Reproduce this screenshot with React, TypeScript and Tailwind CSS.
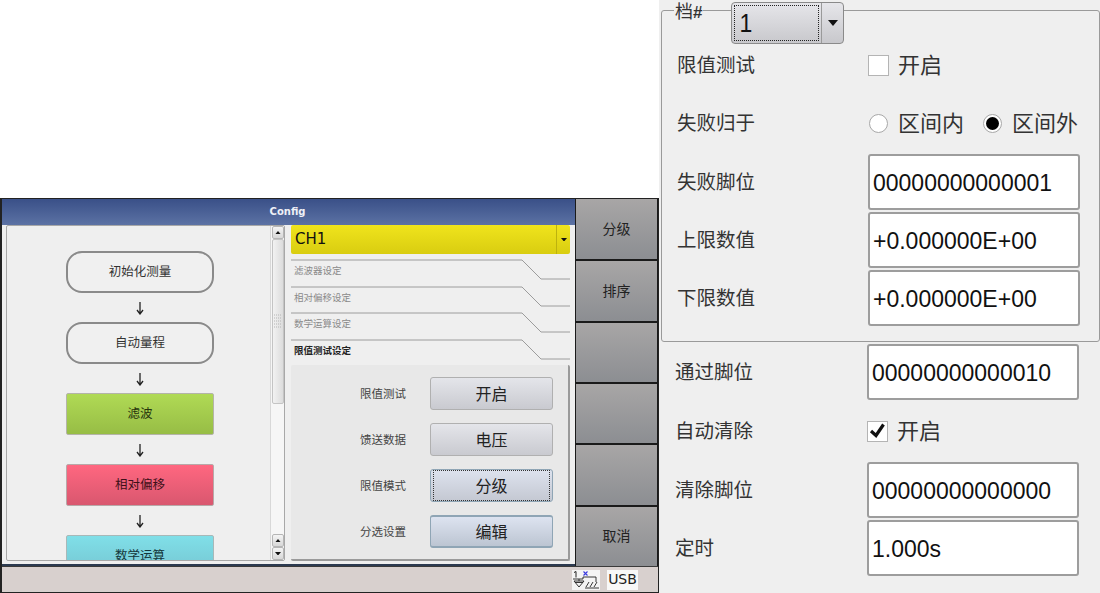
import React from 'react';

const cjk = { fontFamily: '"Noto Sans", "Noto Sans CJK SC", sans-serif' };
const arial = '"Liberation Sans", "Noto Sans CJK SC", sans-serif';

const nodes = [
  { label: '初始化测量', cls: 'rounded-[16px] border-[2px] border-[#8a8a8a] bg-[#f0f0f0] text-[#333]' },
  { label: '自动量程', cls: 'rounded-[16px] border-[2px] border-[#8a8a8a] bg-[#f0f0f0] text-[#333]' },
  { label: '滤波', cls: 'rounded-[2px] border border-[#b4b4a8] bg-gradient-to-b from-[#b0da55] to-[#97bd45] text-[#26330c]' },
  { label: '相对偏移', cls: 'rounded-[2px] border border-[#b8a8a8] bg-gradient-to-b from-[#ff6780] to-[#d9576f] text-[#3d1018]' },
  { label: '数学运算', cls: 'rounded-[2px] border border-[#a8b8b8] bg-gradient-to-b from-[#80dfe8] to-[#74c4d0] text-[#13363b]' },
];

const sections = [
  { label: '滤波器设定', active: false },
  { label: '相对偏移设定', active: false },
  { label: '数学运算设定', active: false },
  { label: '限值测试设定', active: true },
];

const formRows = [
  { label: '限值测试', value: '开启', cls: 'border-[#b0b0b0] from-[#e4e5ea] to-[#c9cad0]' },
  { label: '馈送数据', value: '电压', cls: 'border-[#b0b0b0] from-[#e4e5ea] to-[#c9cad0]' },
  { label: '限值模式', value: '分级', focus: true, cls: 'border-[#8fa5b5] from-[#dde2ee] to-[#c4c8d2]' },
  { label: '分选设置', value: '编辑', cls: 'border-[#8fa5b5] border-t-[2px] border-b-[2px] from-[#dde3f0] to-[#bcc5d2]' },
];

const sideButtons = [
  { label: '分级', h: 'h-[60px]' },
  { label: '排序', h: 'h-[60px]' },
  { label: '', h: 'h-[59px]' },
  { label: '', h: 'h-[59px]' },
  { label: '', h: 'h-[60px]' },
  { label: '取消', h: 'flex-1' },
];

function ArrowDown() {
  return (
    <svg width="10" height="14" viewBox="0 0 10 14" className="block">
      <path d="M5 1v11M2 9l3 4 3-4" fill="none" stroke="#222" strokeWidth="1.3" />
    </svg>
  );
}

function Tri({ up = false, w = 7 }: { up?: boolean; w?: number }) {
  return (
    <svg width={w} height={w * 0.6} viewBox="0 0 10 6" className="block">
      <path d={up ? 'M0 6h10L5 0z' : 'M0 0h10L5 6z'} fill="#111" />
    </svg>
  );
}

function ScrollButton({ up }: { up: boolean }) {
  return (
    <div className="flex h-[13px] w-[12px] shrink-0 items-center justify-center rounded-[2px] border border-[#b5b5b5] bg-gradient-to-b from-[#f4f4f4] to-[#d8d8d8]">
      <Tri up={up} w={6} />
    </div>
  );
}

function Grip() {
  return (
    <svg width="10" height="16" viewBox="0 0 10 16" className="block">
      <path d="M1 1h8M1 4h8M1 7h8M1 10h8M1 13h8" stroke="#b4b4b4" strokeWidth="1" strokeDasharray="1 1" />
    </svg>
  );
}

function SectionHeader({ label, active }: { label: string; active: boolean }) {
  return (
    <div className="relative h-[26.5px] w-[279px]">
      <svg width="279" height="26" viewBox="0 0 279 26" className="absolute left-0 top-0">
        <path d="M0 1h231l19 19h29" fill="none" stroke="#9c9c9c" strokeWidth="1" />
      </svg>
      <div className={`pl-[3px] pt-[5px] text-[9.5px] leading-[14px] ${active ? 'font-bold text-[#222]' : 'text-[#8a8a8a]'}`}>
        {label}
      </div>
    </div>
  );
}

function TriggerIcon() {
  return (
    <svg width="28" height="20" viewBox="0 0 28 20" className="block bg-[#f4f4f4]">
      <path d="M2 2.5l2-1v6" fill="none" stroke="#222" strokeWidth="1" />
      <path d="M1 9h10v-2h13v5M7 9v2M2 11h10l-5 6zM3 12.5h8" fill="none" stroke="#222" strokeWidth="0.9" />
      <path d="M17 12l-3 5M21 12l-3 5M25 12l-3 5M13 18h14" fill="none" stroke="#222" strokeWidth="0.9" />
      <path d="M11.5 1.5l4 4M15.5 1.5l-4 4" stroke="#3a3ae0" strokeWidth="1.1" />
    </svg>
  );
}

function ValueInput({ value }: { value: string }) {
  return (
    <div
      className="flex h-[56px] w-[212px] items-center rounded-[3px] border-[2px] border-[#9d9d9d] bg-white pl-[3px] pt-[1px] text-[23px] text-[#111]"
      style={{ fontFamily: arial }}
    >
      <span className="inline-block scale-y-[1.08]">{value}</span>
    </div>
  );
}

function Row({ label, children, h = 'h-[56px]', col = 'w-[191px]' }: { label: string; children: React.ReactNode; h?: string; col?: string }) {
  return (
    <div className={`flex items-center ${h}`}>
      <div className={`${col} text-[19.5px] text-[#333]`}>{label}</div>
      {children}
    </div>
  );
}

function CheckBox({ checked }: { checked: boolean }) {
  return (
    <div className="flex items-center">
      <div className="flex h-[21px] w-[21px] items-center justify-center border border-[#b4b4b4] bg-white">
        {checked && (
          <svg width="19" height="19" viewBox="0 0 19 19" className="block">
            <path d="M3 9l5 4.5L15.5 2.5" fill="none" stroke="#111" strokeWidth="3.2" />
          </svg>
        )}
      </div>
      <span className="-mt-[2px] ml-[9px] text-[22px] text-[#333]">开启</span>
    </div>
  );
}

function Radio({ on, label }: { on: boolean; label: string }) {
  return (
    <div className="flex items-center">
      <div className="flex h-[19px] w-[19px] items-center justify-center rounded-full border border-[#a8a8a8] bg-white">
        {on && <div className="h-[13px] w-[13px] rounded-full bg-black" />}
      </div>
      <span className="-mt-[2px] ml-[10px] text-[22px] text-[#333]">{label}</span>
    </div>
  );
}

export default function App() {
  return (
    <div className="flex h-[593px] w-[1100px] overflow-hidden bg-white" style={cjk}>
      {/* left: config window */}
      <div className="flex w-[659px] flex-col pt-[198px]">
        <div className="flex h-[395px] flex-col border border-l-[2px] border-[#222] bg-[#efefef]">
          <div className="flex h-[367px]">
            <div className="flex w-[573px] flex-col">
              <div className="flex h-[26px] items-center justify-center bg-gradient-to-b from-[#3a5088] to-[#5c72a4] pb-[2px] pr-[2px] text-[10px] font-bold text-[#eef0f6]" style={{ fontFamily: '"DejaVu Sans", sans-serif' }}>
                Config
              </div>
              <div className="flex flex-1 border-b-[2px] border-[#2c3a50] pl-[4px]">
                {/* flow chart */}
                <div className="flex h-[336px] w-[279px] overflow-hidden rounded-[2px] border border-[#a8a8a8]">
                  <div className="flex w-[264px] flex-col items-center pl-[3px] pt-[25px]">
                    {nodes.map((n, i) => (
                      <React.Fragment key={n.label}>
                        {i > 0 && (
                          <div className="flex h-[29px] shrink-0 items-center justify-center">
                            <ArrowDown />
                          </div>
                        )}
                        <div className={`flex h-[42px] w-[148px] shrink-0 items-center justify-center pt-[1px] text-[12.5px] ${n.cls}`}>
                          {n.label}
                        </div>
                      </React.Fragment>
                    ))}
                  </div>
                  <div className="flex w-[14px] flex-col items-center border-l border-[#d8d8d8] bg-[#f6f6f6]">
                    <ScrollButton up />
                    <div className="flex h-[165px] w-[12px] shrink-0 items-center justify-center rounded-[2px] border border-[#c4c4c4] bg-gradient-to-r from-[#f2f2f2] to-[#dcdcdc]">
                      <Grip />
                    </div>
                    <div className="flex-1" />
                    <ScrollButton up />
                    <ScrollButton up={false} />
                  </div>
                </div>
                {/* settings column */}
                <div className="ml-[6px] flex h-[336px] w-[279px] flex-col">
                  <div className="flex h-[29px] shrink-0 items-center rounded-[2px] bg-gradient-to-b from-[#f0e41c] to-[#d9cd10]">
                    <div className="flex-1 pl-[4px] text-[15px] text-[#111]" style={{ fontFamily: '"DejaVu Sans", sans-serif' }}>CH1</div>
                    <div className="flex h-full w-[14px] items-center justify-center border-l border-[#bdb20e]">
                      <Tri w={6} />
                    </div>
                  </div>
                  <div className="mt-[5px] flex shrink-0 flex-col">
                    {sections.map((s) => (
                      <SectionHeader key={s.label} label={s.label} active={s.active} />
                    ))}
                  </div>
                  <div className="flex flex-1 flex-col gap-[13px] rounded-[2px] border-b-[2px] border-r-[2px] border-[#9a9a9a] bg-[#e8e8e8] pl-[69px] pt-[12px]">
                    {formRows.map((r) => (
                      <div key={r.label} className="flex h-[33px] items-center">
                        <div className="w-[70px] text-[11.5px] text-[#444]">{r.label}</div>
                        <div className={`flex h-[33px] w-[123px] items-center justify-center rounded-[3px] border bg-gradient-to-b text-[16px] text-[#222] ${r.cls}`}>
                          <div className={`flex h-full w-full items-center justify-center ${r.focus ? 'm-[2px] border border-dotted border-[#333]' : ''}`}>
                            {r.value}
                          </div>
                        </div>
                      </div>
                    ))}
                  </div>
                </div>
              </div>
            </div>
            {/* soft keys */}
            <div className="flex w-[83px] flex-col gap-[2px] bg-[#1a1a1a] pl-[1px] pr-[1px]">
              {sideButtons.map((b, i) => (
                <div key={i} className={`flex items-center justify-center bg-gradient-to-b from-[#a8a6a6] to-[#8c8e92] pb-[2px] text-[14px] text-[#222] ${b.h}`}>
                  {b.label}
                </div>
              ))}
            </div>
          </div>
          {/* status bar */}
          <div className="flex flex-1 items-center justify-end gap-[7px] border-t border-[#3a3a3a] bg-[#d8d0ce] pr-[20px]">
            <TriggerIcon />
            <div className="flex h-[20px] w-[31px] items-center justify-center bg-[#f8f8f8] text-[14px] text-[#222]" style={{ fontFamily: '"DejaVu Sans", sans-serif' }}>
              USB
            </div>
          </div>
        </div>
      </div>

      {/* right: limit settings dialog */}
      <div className="flex flex-1 flex-col bg-[#efefef] pl-[2px] pt-[10px]">
        <div className="h-[332px] w-[439px] rounded-[3px] border border-[#9a9a9a] pl-[15px]">
          <div className="-mb-[7px] -mt-[10px] flex h-[43px] items-start">
            <div className="-ml-[3px] bg-[#efefef] px-[1px] text-[18px] leading-[22px] text-[#333]" style={{ fontFamily: arial }}>
              档<span className="text-[17px] font-bold">#</span>
            </div>
            <div className="ml-[28px] mt-[1px] flex h-[42px] w-[113px] rounded-[4px] border border-[#8a8a8a] bg-gradient-to-b from-[#e6e6ea] to-[#c8c8cc]">
              <div className="m-[2px] flex flex-1 items-center border border-dotted border-[#222] pl-[4px] text-[23px] text-[#111]" style={{ fontFamily: arial }}>
                <span className="inline-block scale-y-[1.1]">1</span>
              </div>
              <div className="flex w-[22px] items-center justify-center border-l border-[#9a9a9a]">
                <Tri w={10} />
              </div>
            </div>
          </div>
          <Row label="限值测试"><CheckBox checked={false} /></Row>
          <div className="mt-[2px]">
            <Row label="失败归于">
              <div className="ml-[1px] flex gap-[19px]">
                <Radio on={false} label="区间内" />
                <Radio on label="区间外" />
              </div>
            </Row>
          </div>
          <div className="mt-[3px] flex flex-col gap-[2px]">
            <Row label="失败脚位"><ValueInput value="00000000000001" /></Row>
            <Row label="上限数值"><ValueInput value="+0.000000E+00" /></Row>
            <Row label="下限数值"><ValueInput value="+0.000000E+00" /></Row>
          </div>
        </div>
        <div className="ml-[14px] mt-[2px] flex flex-col gap-[2px]">
          <Row label="通过脚位" col="w-[192px]"><ValueInput value="00000000000010" /></Row>
          <Row label="自动清除" h="h-[58px]" col="w-[192px]"><CheckBox checked /></Row>
          <Row label="清除脚位" col="w-[192px]"><ValueInput value="00000000000000" /></Row>
          <Row label="定时" col="w-[192px]"><ValueInput value="1.000s" /></Row>
        </div>
      </div>
    </div>
  );
}
